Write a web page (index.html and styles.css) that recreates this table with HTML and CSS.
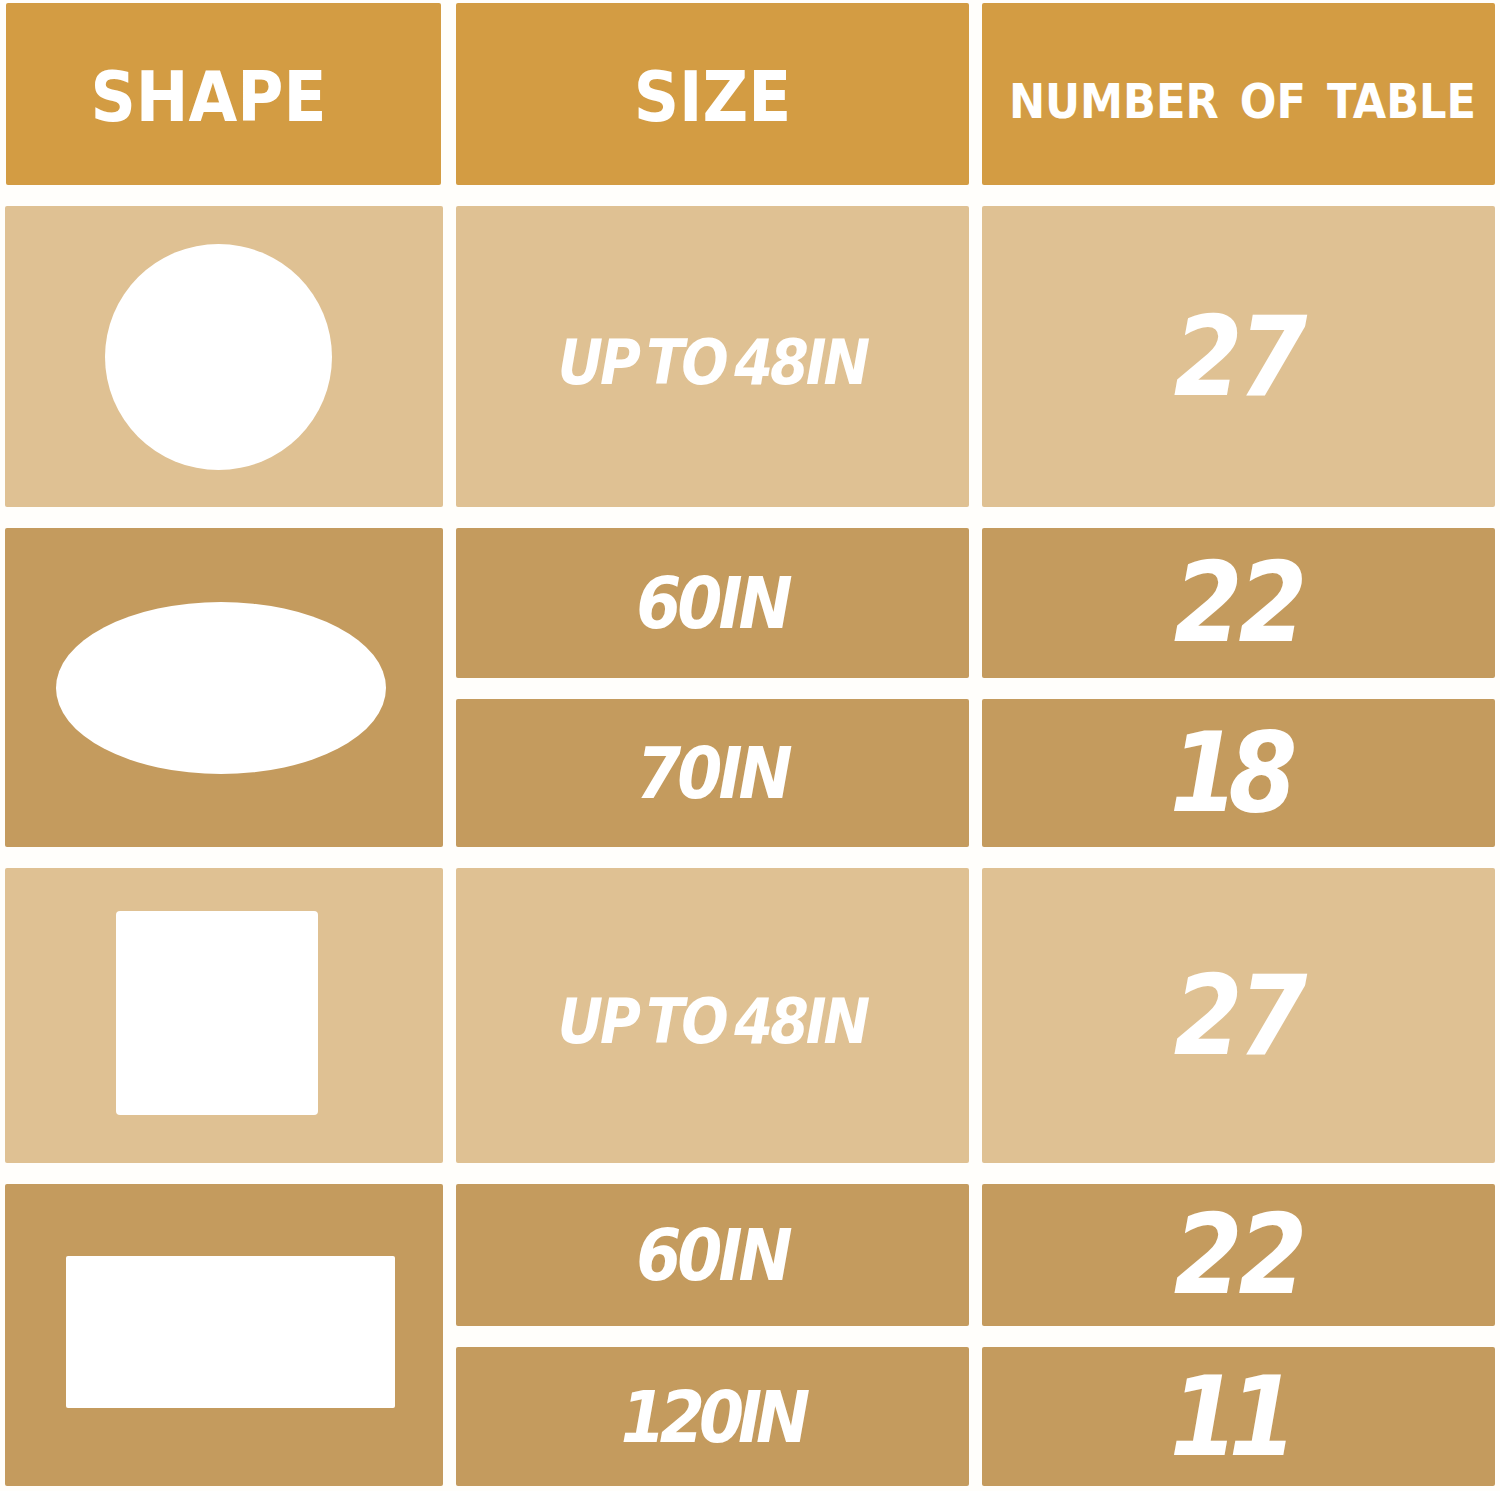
FILE: index.html
```html
<!DOCTYPE html>
<html lang="en">
<head>
<meta charset="utf-8">
<title>Table size chart</title>
<link rel="stylesheet" href="styles.css">
</head>
<body>
<div class="chart">
  <div class="cell head head-shape"><span class="h-big shape-label">SHAPE</span></div>
  <div class="cell head"><span class="h-big">SIZE</span></div>
  <div class="cell head"><span class="h-small">NUMBER OF TABLE</span></div>

  <div class="cell light shape-cell r1"><div class="circle"></div></div>
  <div class="cell light r1"><span class="size-up">UP TO 48IN</span></div>
  <div class="cell light r1"><span class="num">27</span></div>

  <div class="cell mid shape-cell r2"><div class="oval"></div></div>
  <div class="cell mid"><span class="size">60IN</span></div>
  <div class="cell mid"><span class="num">22</span></div>
  <div class="cell mid"><span class="size">70IN</span></div>
  <div class="cell mid"><span class="num num-narrow">18</span></div>

  <div class="cell light shape-cell r3"><div class="square"></div></div>
  <div class="cell light r3"><span class="size-up">UP TO 48IN</span></div>
  <div class="cell light r3"><span class="num">27</span></div>

  <div class="cell mid shape-cell r4"><div class="rect"></div></div>
  <div class="cell mid"><span class="size">60IN</span></div>
  <div class="cell mid"><span class="num">22</span></div>
  <div class="cell mid"><span class="size size-long">120IN</span></div>
  <div class="cell mid"><span class="num num-narrow">11</span></div>
</div>
</body>
</html>
```

FILE: styles.css
```css
html, body {
  margin: 0;
  padding: 0;
  background: #fffefb;
}

.chart {
  display: grid;
  grid-template-columns: 438px 513px 513px;
  grid-template-rows: 182px 301px 150px 148px 295px 142px 139px;
  column-gap: 13px;
  row-gap: 21px;
  padding: 3px 0 0 5px;
  width: 1478px;
}

.cell {
  display: flex;
  align-items: center;
  justify-content: center;
  border-radius: 2px;
  color: #ffffff;
  overflow: hidden;
}

.head {
  background: #d39c43;
}

.head-shape {
  margin-left: 1px;
  margin-right: 2px;
}

.light {
  background: #dfc193;
}

.mid {
  background: #c49b5e;
}

.shape-cell.r2 { grid-row: 3 / span 2; }
.shape-cell.r4 { grid-row: 6 / span 2; }

.h-big {
  font-family: "DejaVu Sans Condensed", "DejaVu Sans", sans-serif;
  font-weight: 700;
  font-size: 70px;
  letter-spacing: 0px;
  line-height: 1;
  margin-top: 6px;
}

.shape-label {
  margin-right: 30px;
}

.h-small {
  font-family: "DejaVu Sans Condensed", "DejaVu Sans", sans-serif;
  font-weight: 700;
  font-size: 48px;
  letter-spacing: 0px;
  word-spacing: 6px;
  line-height: 1;
  margin-top: 14px;
  margin-left: 8px;
  white-space: nowrap;
}

.size-up {
  font-family: "DejaVu Sans Condensed", "DejaVu Sans", sans-serif;
  font-weight: 700;
  font-style: oblique;
  font-size: 62px;
  letter-spacing: -3px;
  word-spacing: -8px;
  line-height: 1;
  margin-top: 12px;
  white-space: nowrap;
}

.size {
  font-family: "DejaVu Sans Condensed", "DejaVu Sans", sans-serif;
  font-weight: 700;
  font-style: oblique;
  font-size: 72px;
  letter-spacing: -4px;
  line-height: 1;
  white-space: nowrap;
}

.size-long {
  letter-spacing: -6px;
}

.num {
  font-family: "DejaVu Sans Condensed", "DejaVu Sans", sans-serif;
  font-weight: 700;
  font-style: oblique;
  font-size: 110px;
  letter-spacing: -4px;
  line-height: 1;
}

.num-narrow {
  letter-spacing: -10px;
  margin-right: 20px;
}

.circle {
  width: 227px;
  height: 226px;
  border-radius: 50%;
  background: #ffffff;
  margin-right: 12px;
}

.oval {
  width: 330px;
  height: 172px;
  border-radius: 50%;
  background: #ffffff;
  margin-right: 6px;
}

.square {
  width: 202px;
  height: 204px;
  border-radius: 4px;
  background: #ffffff;
  margin-right: 14px;
  margin-bottom: 5px;
}

.rect {
  width: 329px;
  height: 152px;
  border-radius: 2px;
  background: #ffffff;
  margin-left: 12px;
  margin-bottom: 6px;
}
```
